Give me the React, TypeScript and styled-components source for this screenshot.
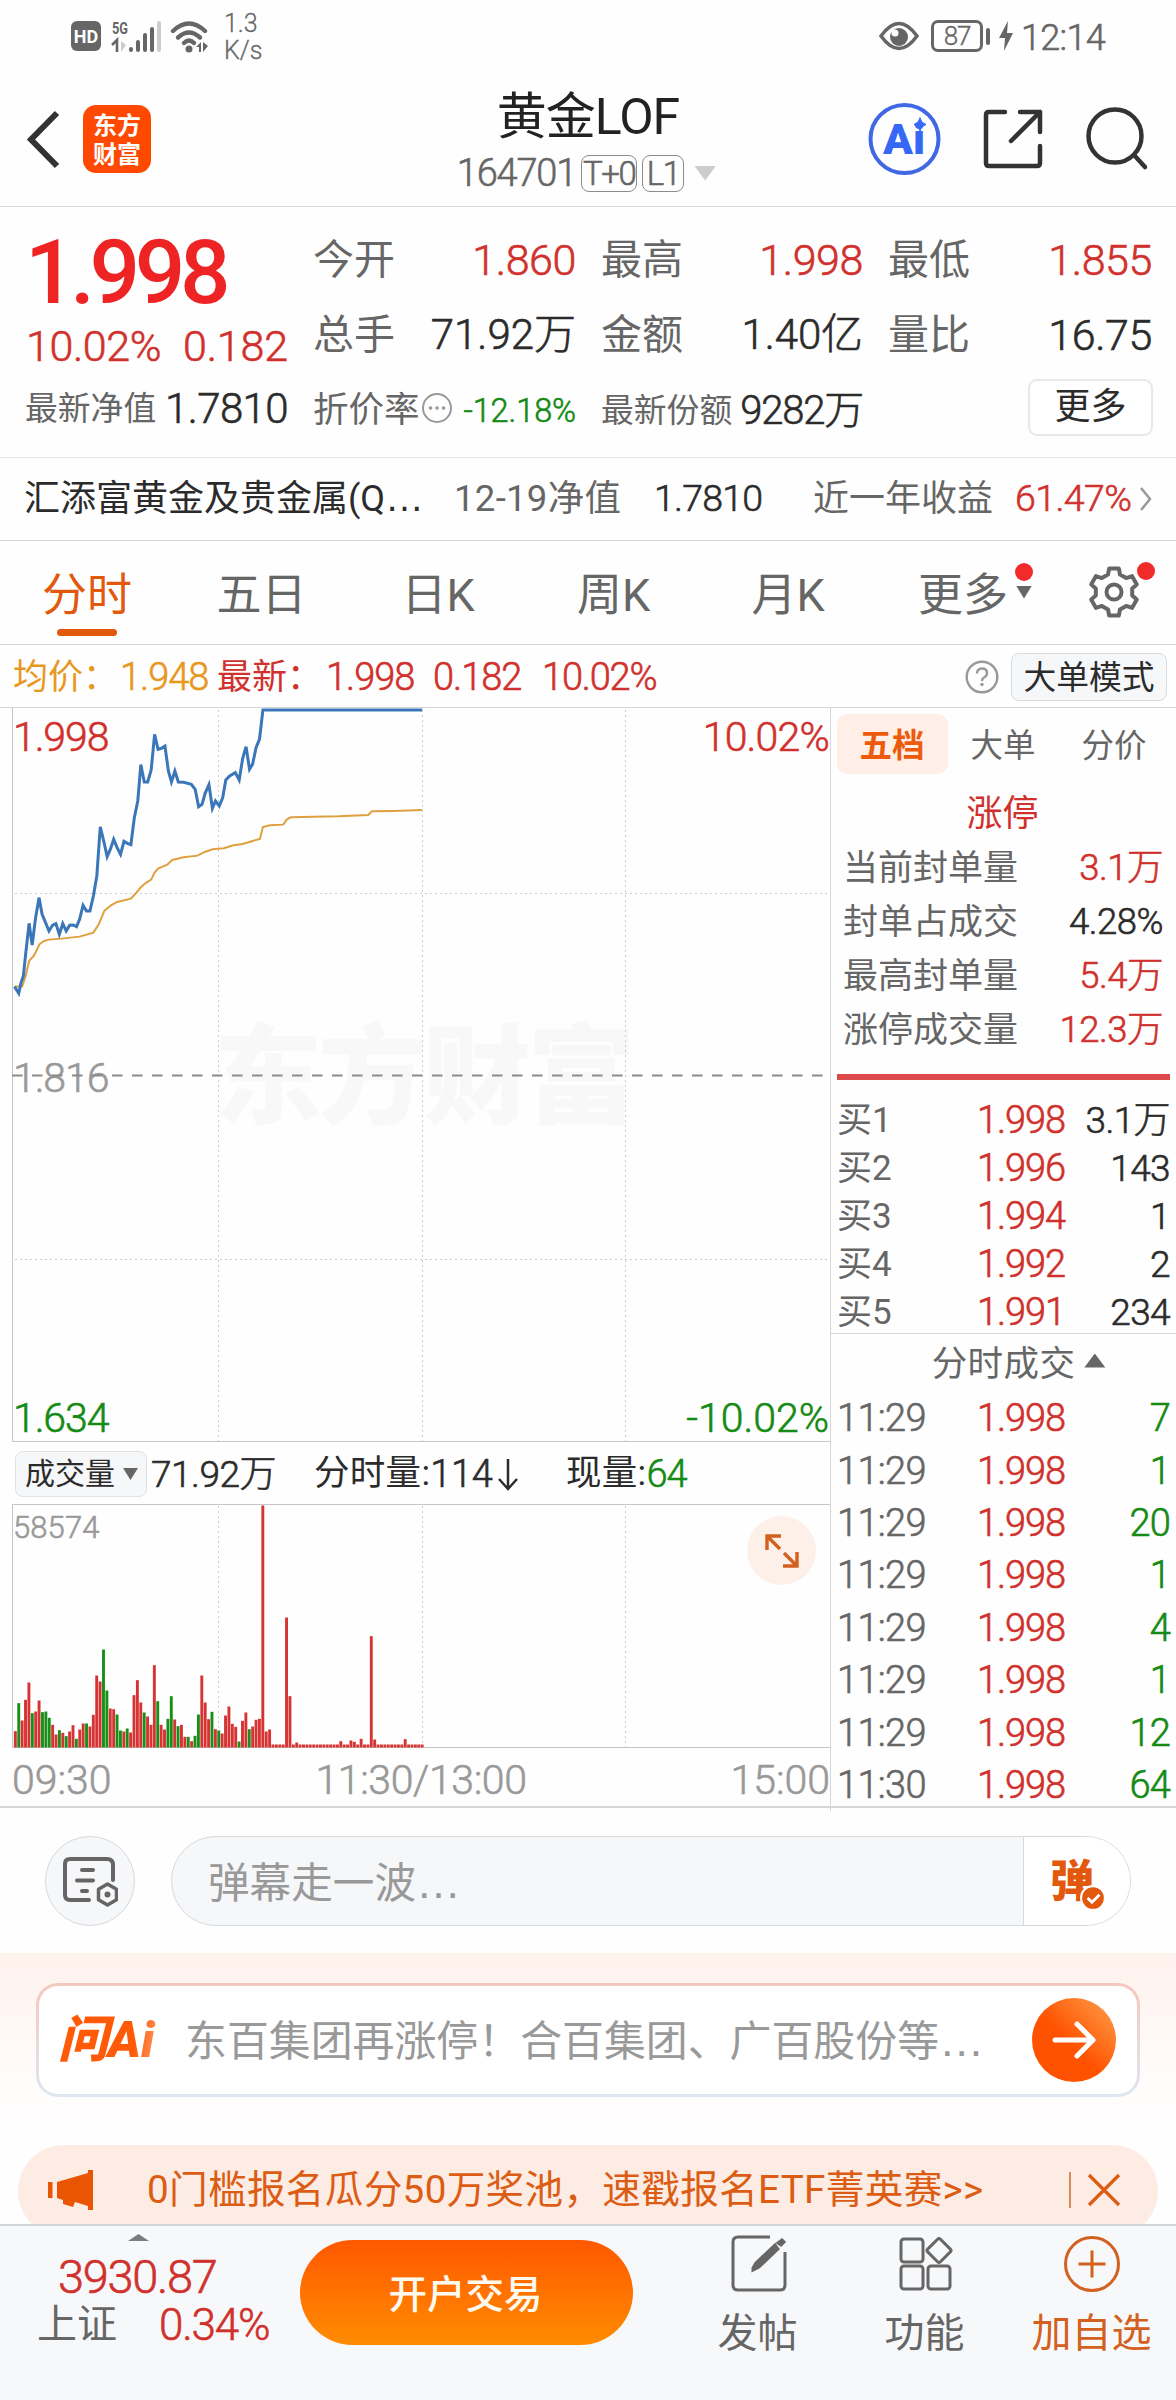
import React from "react";
import styled, { createGlobalStyle, css } from "styled-components";

const RED = "#d0312d";
const GREEN = "#158a15";
const INK = "#2b2b2b";
const GREY = "#666";
const MUTE = "#999";
const ORANGE = "#e2580c";
const LINE = "#d4d6d8";

const Global = createGlobalStyle`
  * { box-sizing: border-box; }
  body { margin: 0; background: #fff; }
`;

const Screen = styled.div`
  width: 1176px;
  height: 2400px;
  overflow: hidden;
  display: flex;
  flex-direction: column;
  background: #fefefe;
  font-family: Roboto, "Noto Sans CJK SC", sans-serif;
  font-weight: 400;
  color: ${INK};
  line-height: 1;
  white-space: nowrap;
`;

type TextProps = { $s?: number; $c?: string; $ls?: number };
const type = css<TextProps>`
  font-size: ${(p) => p.$s ?? 36}px;
  color: ${(p) => p.$c ?? INK};
  letter-spacing: ${(p) => p.$ls ?? 0}px;
`;
/* light figures, thickened slightly so they sit level with the Chinese labels */
const figures = css`
  font-weight: 300;
  -webkit-text-stroke: 0.6px currentColor;
`;
const Label = styled.span<TextProps>`${type}`;
const Num = styled.span<TextProps>`${type} ${figures}`;
const Ellipsis = styled.span`
  font-family: "Liberation Sans", sans-serif;
  font-size: 1.08em;
  line-height: 0;
`;

/* status bar */
const StatusBar = styled.div`
  height: 72px;
  display: flex;
  align-items: center;
  padding: 0 71px 0 71px;
`;
const Hd = styled.div`
  width: 30px;
  height: 30px;
  border-radius: 6px;
  background: #666;
  color: #fff;
  font: 700 18px/31px Roboto, sans-serif;
  text-align: center;
`;
const NetSpeed = styled.div`
  margin: 2px 0 0 15px;
  font-size: 25px;
  font-weight: 300;
  line-height: 27px;
  color: ${GREY};
  -webkit-text-stroke: 0.3px currentColor;
`;
const StatusRight = styled.div`
  margin-left: auto;
  display: flex;
  align-items: center;
`;
const Clock = styled.div`
  ${figures}
  margin: 4px 0 0 8px;
  font-size: 36px;
  letter-spacing: -0.7px;
  color: ${GREY};
`;
const Battery = styled.div`
  width: 52px;
  height: 32px;
  margin-left: 12px;
  border: 3px solid ${GREY};
  border-radius: 7px;
  font-size: 26px;
  font-weight: 300;
  line-height: 27px;
  letter-spacing: -1px;
  text-align: center;
  color: ${GREY};
  -webkit-text-stroke: 0.4px currentColor;
`;
const BatteryNub = styled.div`
  width: 4px;
  height: 17px;
  margin: 0 9px 0 3px;
  border-radius: 2px;
  background: ${GREY};
`;

/* title bar */
const NavBar = styled.div`
  height: 135px;
  display: grid;
  grid-template-columns: 300px 576px 300px;
  border-bottom: 1px solid ${LINE};
`;
const NavLeft = styled.div`
  display: flex;
  align-items: center;
  padding-left: 26px;
`;
const AppLogo = styled.div`
  width: 68px;
  height: 68px;
  margin-left: 23px;
  border-radius: 13px;
  background: #ff4800;
  color: #fff;
  display: flex;
  flex-direction: column;
  align-items: center;
  justify-content: center;
  font: 700 24px/29px "Noto Sans CJK SC", sans-serif;
  padding-bottom: 2px;
`;
const NavTitle = styled.div`
  display: flex;
  flex-direction: column;
  align-items: center;
  padding: 20px 0 0 0;
`;
const Code = styled.div`
  display: flex;
  align-items: center;
  height: 38px;
  margin: 12px 3px 0 0;
`;
const Badge = styled.span<{ $width: number }>`
  ${figures}
  width: ${(p) => p.$width}px;
  height: 37px;
  margin-left: 5px;
  border: 1.5px solid #8c8c8c;
  border-radius: 8px;
  font-size: 33px;
  line-height: 36px;
  letter-spacing: -1.5px;
  text-align: center;
  color: ${GREY};
`;
const Triangle = styled.i<{ $w: number; $h: number; $c: string; $up?: boolean; $m?: string }>`
  display: inline-block;
  flex: none;
  width: ${(p) => p.$w}px;
  height: ${(p) => p.$h}px;
  margin: ${(p) => p.$m ?? "0"};
  background: ${(p) => p.$c};
  clip-path: ${(p) => (p.$up ? "polygon(50% 0, 100% 100%, 0 100%)" : "polygon(0 0, 100% 0, 50% 100%)")};
`;
const NavRight = styled.div`
  display: flex;
  align-items: center;
  padding: 0 24px 0 0;
  justify-content: flex-end;
  svg { flex: none; }
`;

/* quote */
const Quote = styled.div`
  height: 251px;
  padding: 28px 0 0 25px;
  display: flex;
  border-bottom: 1px solid #e9e9e9;
`;
const PriceBlock = styled.div`
  width: 288px;
`;
const BigPrice = styled.div`
  height: 76px;
  padding: 2px 0 0 0;
  font-size: 89px;
  line-height: 72px;
  font-weight: 500;
  letter-spacing: -5.4px;
  color: #ee2424;
`;
const ChangeLine = styled.div`
  display: flex;
  height: 70px;
  align-items: center;
  gap: 22px;
  padding: 1px 0 0 1px;
`;
const QuoteGrid = styled.div`
  display: grid;
  grid-template-columns: 263px 262px 264px;
  grid-template-rows: 50px 100px 52px;
  column-gap: 25px;
  align-items: center;
`;
const Cell = styled.div`
  display: flex;
  align-items: center;
  justify-content: space-between;
`;
const NavCell = styled(Cell)`
  width: 263px;
  height: 56px;
`;
const MoreButton = styled.button`
  justify-self: end;
  width: 125px;
  height: 57px;
  margin: -8px -1px 0 0;
  padding: 0;
  border: 2px solid #e6e8ea;
  border-radius: 9px;
  background: #fff;
  font: 400 36px/1 Roboto, "Noto Sans CJK SC", sans-serif;
  color: ${INK};
`;
const FundRow = styled.div`
  height: 83px;
  display: grid;
  grid-template-columns: 430px 200px 159px 202px 124px 1fr;
  align-items: center;
  padding: 0 22px 0 24px;
  border-bottom: 1px solid ${LINE};
`;

/* period tabs */
const Tabs = styled.div`
  height: 104px;
  display: grid;
  grid-template-columns: 174px 175px 178px 173px 176px 196px 1fr;
  border-bottom: 1px solid ${LINE};
`;
const Tab = styled.div<{ $on?: boolean }>`
  display: flex;
  justify-content: center;
  align-items: center;
  padding-top: 6px;
  font-size: 45px;
  color: ${(p) => (p.$on ? ORANGE : GREY)};
  position: relative;
  &::after {
    content: "";
    display: ${(p) => (p.$on ? "block" : "none")};
    position: absolute;
    left: 57px;
    bottom: 8px;
    width: 60px;
    height: 7px;
    border-radius: 4px;
    background: ${ORANGE};
  }
`;
const Dot = styled.i`
  width: 18px;
  height: 18px;
  border-radius: 50%;
  background: #f12a2a;
`;
const MoreMark = styled.div`
  display: flex;
  flex-direction: column;
  align-items: center;
  gap: 5px;
  margin: -30px -3px 0 7px;
`;
const GearBox = styled.div`
  position: relative;
  padding: 24px 0 0 15px;
  & > i { position: absolute; left: 65px; top: 21px; }
`;
const InfoRow = styled.div`
  height: 63px;
  display: flex;
  align-items: center;
  padding: 2px 9px 0 13px;
  border-bottom: 1px solid ${LINE};
`;
const InfoGroup = styled.div<{ $width: number }>`
  display: flex;
  align-items: center;
  width: ${(p) => p.$width}px;
`;
const ModeButton = styled.button`
  width: 156px;
  height: 48px;
  margin-left: 12px;
  padding: 2px 0 0;
  border: 1.5px solid #d9dcdf;
  border-radius: 8px;
  background: #f6f7f9;
  font: 400 32.8px/1 Roboto, "Noto Sans CJK SC", sans-serif;
  color: ${INK};
`;
const Spacer = styled.div`flex: 1;`;

/* chart and order book */
const Market = styled.div`
  height: 1100px;
  display: grid;
  grid-template-columns: 831px 345px;
  border-bottom: 2px solid ${LINE};
`;
const Charts = styled.div`
  padding-left: 12px;
  border-right: 1px solid ${LINE};
`;
const Plot = styled.div<{ $h: number }>`
  position: relative;
  height: ${(p) => p.$h}px;
  svg { display: block; }
`;
const PlotTag = styled.span<TextProps & { $top: number; $right?: boolean }>`
  ${type}
  ${figures}
  position: absolute;
  top: ${(p) => p.$top}px;
  ${(p) => (p.$right ? "right: 1px;" : "left: 1px;")}
`;
const Watermark = styled.div`
  position: absolute;
  top: 302px;
  left: 202px;
  font: 900 108px/116px "Noto Sans CJK SC", sans-serif;
  letter-spacing: -3.5px;
  color: #f8f8f8;
`;
const PlotArt = styled.svg`
  position: relative;
`;
const ExpandButton = styled.div`
  position: absolute;
  left: 735px;
  top: 12px;
  width: 69px;
  height: 69px;
  border-radius: 50%;
  background: #fdf0e8;
  display: flex;
  align-items: center;
  justify-content: center;
`;
const VolumeBar = styled.div`
  height: 62px;
  display: flex;
  align-items: center;
  padding: 2px 0 0 3px;
`;
const Indicator = styled.div`
  width: 132px;
  height: 46px;
  margin-right: 4px;
  display: flex;
  align-items: center;
  padding-left: 9px;
  border: 1.5px solid #dfe2e5;
  border-radius: 8px;
  background: #f6f7f9;
`;
const Axis = styled.div`
  height: 59px;
  display: grid;
  grid-template-columns: 1fr auto 1fr;
  align-items: center;
  padding-top: 5px;
  & > :last-child { text-align: right; }
`;

const Book = styled.div`
  display: flex;
  flex-direction: column;
`;
const BookTabs = styled.div`
  display: grid;
  grid-template-columns: 111px 111px 111px;
  height: 67px;
  padding: 6px 0 0 6px;
`;
const BookTab = styled.div<{ $on?: boolean }>`
  display: flex;
  align-items: center;
  justify-content: center;
  height: 60px;
  border-radius: 10px;
  font-size: 32.5px;
  padding: 5px 1px 0 0;
  font-weight: ${(p) => (p.$on ? 700 : 400)};
  color: ${(p) => (p.$on ? "#ee5a0c" : GREY)};
  background: ${(p) => (p.$on ? "#ffefe6" : "transparent")};
`;
const LimitTitle = styled.div`
  height: 66px;
  padding-top: 21px;
  margin-right: 2px;
  text-align: center;
  font-size: 36px;
  color: ${RED};
`;
const LimitRow = styled.div`
  height: 54px;
  display: flex;
  justify-content: space-between;
  align-items: center;
  padding: 0 13px 0 12px;
`;
const RatioBar = styled.div`
  height: 6px;
  margin: 17px 6px 16px;
  background: #dd4a4b;
`;
const QuoteRow = styled.div<{ $h: number }>`
  height: ${(p) => p.$h}px;
  display: grid;
  grid-template-columns: 140px 1fr auto;
  align-items: center;
  padding: 0 6px;
`;
const BuyList = styled.div`
  height: 238px;
  border-bottom: 1px solid ${LINE};
`;
const TradeHead = styled.div`
  height: 58px;
  display: flex;
  align-items: center;
  justify-content: center;
  padding: 3px 0 0 36px;
  margin-right: 6px;
`;

/* comment entry */
const CommentBar = styled.div`
  height: 145px;
  display: flex;
  align-items: center;
  padding: 0 45px;
  gap: 36px;
`;
const RoundButton = styled.div`
  width: 90px;
  height: 90px;
  border: 1.5px solid #d6d9dd;
  border-radius: 50%;
  background: #f6f7f9;
  display: flex;
  align-items: center;
  justify-content: center;
`;
const CommentBox = styled.div`
  flex: 1;
  height: 90px;
  display: flex;
  border: 1.5px solid #d6d9dd;
  border-radius: 45px;
  overflow: hidden;
  background: #f6f7f9;
`;
const CommentField = styled.div`
  flex: 1;
  padding: 7px 0 0 36px;
  display: flex;
  align-items: center;
`;
const DanmuToggle = styled.div`
  width: 107px;
  padding: 0 0 5px 26px;
  border-left: 1.5px solid #d6d9dd;
  background: #fff;
  display: flex;
  align-items: center;
  font: 900 44px/1 "Noto Sans CJK SC", sans-serif;
  color: ${ORANGE};
  svg { flex: none; margin: 39px 0 0 -14px; }
`;

/* ask banner */
const AskBand = styled.div`
  height: 192px;
  padding: 30px 36px 0;
  background: linear-gradient(#fef2ed, #fffcfb 70%, #fff);
`;
const AskCard = styled.div`
  height: 114px;
  display: flex;
  align-items: center;
  padding: 0 21px 0 19px;
  border: 3px solid transparent;
  border-radius: 22px;
  background: linear-gradient(#fff, #fff) padding-box, linear-gradient(#f4c8bc, #dfe7f4) border-box;
`;
const AskLogo = styled.span`
  width: 127px;
  font: italic 900 50px/1.2 Roboto, "Noto Sans CJK SC", sans-serif;
  letter-spacing: 0;
  background: linear-gradient(100deg, #ff5a08 60%, #ff9a66 78%);
  -webkit-background-clip: text;
  background-clip: text;
  color: transparent;
`;
const AskText = styled.span`
  padding-top: 4px;
  font-size: 41.9px;
  color: ${MUTE};
`;
const Go = styled.div`
  width: 84px;
  height: 84px;
  margin-left: auto;
  border-radius: 50%;
  background: linear-gradient(45deg, #ff5200 45%, #ff9440 90%);
  display: flex;
  align-items: center;
  justify-content: center;
`;

/* promo strip */
const PromoClip = styled.div`
  height: 79px;
  overflow: hidden;
  padding: 0 18px;
`;
const Promo = styled.div`
  height: 92px;
  display: flex;
  align-items: center;
  padding: 0 37px 2px 30px;
  border-radius: 46px;
  background: #fcece3;
`;
const PromoText = styled.span`
  margin-left: 53px;
  font-size: 38.6px;
  letter-spacing: 0.35px;
  color: #dc5c14;
`;
const PromoRule = styled.i`
  width: 2px;
  height: 36px;
  margin: 0 16px 0 auto;
  background: #d98a5c;
`;

/* bottom bar */
const Dock = styled.div`
  flex: 1;
  display: flex;
  border-top: 2px solid ${LINE};
  background: #f7f8fa;
`;
const Index = styled.div`
  width: 300px;
  padding-top: 8px;
  display: flex;
  flex-direction: column;
`;
const IndexValue = styled.div`
  height: 50px;
  padding: 12px 0 0 58px;
`;
const IndexLine = styled.div`
  display: flex;
  align-items: center;
  height: 48px;
  margin-top: 10px;
  padding-left: 37px;
  gap: 42px;
`;
const TradeButton = styled.button`
  width: 333px;
  height: 105px;
  margin-top: 14px;
  padding: 0 2px 2px 0;
  border: 0;
  border-radius: 53px;
  background: linear-gradient(#ff5800, #ff8c00);
  color: #fffaf0;
  font: 500 38.5px/1 "Noto Sans CJK SC", sans-serif;
`;
const Actions = styled.div`
  flex: 1;
  display: grid;
  grid-template-columns: 167px 167px 167px;
  margin-left: 41px;
`;
const Action = styled.div<{ $hot?: boolean }>`
  display: flex;
  flex-direction: column;
  align-items: center;
  padding-top: 7px;
  gap: 21px;
  font-size: 40px;
  color: ${(p) => (p.$hot ? "#d3601f" : GREY)};
`;

const pricePoints =
  "38,1322 49,1342 55,1310 61,1290 67,1225 76,1132 84,1197 93,1115 102,1055 110,1105 119,1130 128,1155 137,1138 146,1133 155,1165 164,1133 173,1155 182,1138 191,1137 200,1142 208,1120 217,1078 226,1095 235,1095 244,1050 253,990 262,843 271,885 280,932 289,908 297,880 306,905 315,925 324,886 333,892 342,896 351,815 360,765 368,656 377,708 386,708 395,672 404,565 413,610 422,607 431,600 440,675 448,708 457,675 466,708 480,709 500,715 510,730 519,782 528,775 536,742 546,716 555,787 563,765 573,780 582,755 590,702 600,690 615,680 625,702 634,638 643,602 652,670 660,655 669,605 678,580 687,492 1103,492";
const averagePoints =
  "38,1322 58,1322 67,1290 76,1245 88,1230 95,1215 103,1195 115,1185 128,1181 160,1178 208,1172 244,1160 258,1135 273,1094 290,1078 306,1068 342,1058 355,1042 368,1024 380,1012 395,1001 404,980 413,968 437,956 450,942 480,934 516,929 535,918 555,910 585,907 610,898 634,894 660,885 679,879 687,843 705,838 740,836 750,820 760,814 885,811 962,807 972,796 1030,795 1103,792";

/* one entry per minute: bar height in thirds of a pixel, negative for a falling minute */
const volumes = [
  49, -133, 81, 143, 195, -103, 108, 141, -106, -108, -89, 68, 39, -52, 44, -34, 48, 67, -26, 54, 72, -72, 63, 98,
  216, 198, -294, -171, 117, 115, -99, -51, 48, -57, 45, 157, 202, 135, -105, 93, 68, 247, -139, 68, 54, -86, -154,
  84, -64, 68, 32, -32, 19, -35, -99, 216, 135, 85, -107, 55, -51, 42, 96, 123, 71, 62, -18, 80, 105, -55, 63, 83,
  86, 726, 48, 54, 9, 9, 9, 9, 390, 154, 9, 15, 9, 9, 9, 9, 9, 9, 9, 9, 9, 9, 9, 9, 19, 9, 9, 21, 17, 9, 26, 9, 9,
  334, 24, 9, 9, 9, 9, 9, 9, 9, 9, 25, 9, 9, 9, 9, 9,
];

const limits: [string, string, string][] = [
  ["当前封单量", "3.1万", RED],
  ["封单占成交", "4.28%", INK],
  ["最高封单量", "5.4万", RED],
  ["涨停成交量", "12.3万", RED],
];
const bids: [string, string, string][] = [
  ["买1", "1.998", "3.1万"],
  ["买2", "1.996", "143"],
  ["买3", "1.994", "1"],
  ["买4", "1.992", "2"],
  ["买5", "1.991", "234"],
];
const trades: [string, string][] = [
  ["11:29", "7"],
  ["11:29", "1"],
  ["11:29", "20"],
  ["11:29", "1"],
  ["11:29", "4"],
  ["11:29", "1"],
  ["11:29", "12"],
  ["11:30", "64"],
];

const SignalArt = styled.svg`
  margin-left: 10px;
`;
const SignalIcons = () => (
  <SignalArt width="98" height="36" viewBox="0 -1 98 36">
    <text x="1" y="14.500" fontFamily="Roboto, sans-serif" fontWeight="700" fontSize="16" textLength="16" lengthAdjust="spacingAndGlyphs" fill="#666">5G</text>
    <path d="M1 26l5-5v12" fill="none" stroke="#666" strokeWidth="2.6" />
    <path d="M10 22v11l5-7z" fill="#ccc" />
    <g strokeWidth="4" strokeLinecap="round" stroke="#666">
      <path d="M20 30v1M27 23v8M34 16v15M41 10v21" />
      <path d="M48 4v27" stroke="#ccc" />
    </g>
    <g fill="none" stroke="#666" strokeWidth="4.4" strokeLinecap="round">
      <path d="M62 12q16-15 32 0" />
      <path d="M67 18.500q11-10 22 0" />
      <path d="M73 24q5-5 10 0" />
    </g>
    <circle cx="78" cy="30" r="3.500" fill="#666" />
    <path d="M90 23v10h-2v-5h-3zM92 23v10l5-6z" fill="#666" />
  </SignalArt>
);

const Gear = () => {
  const pts: string[] = [];
  for (let i = 0; i < 6; i++) {
    const a = (i * Math.PI) / 3 - Math.PI / 2;
    [[-0.33, 18.5], [-0.2, 24], [0.2, 24], [0.33, 18.5]].forEach(([d, r]) =>
      pts.push(`${(27 + r * Math.cos(a + d)).toFixed(1)},${(27 + r * Math.sin(a + d)).toFixed(1)}`),
    );
  }
  return (
    <svg width="54" height="54" viewBox="0 0 54 54" fill="none" stroke="#666" strokeWidth="4">
      <polygon points={pts.join(" ")} strokeLinejoin="round" />
      <circle cx="27" cy="27" r="7.500" />
    </svg>
  );
};

const DotsArt = styled.svg`
  margin: -6px 8px 0 0;
`;
const DownArrow = styled.svg`
  margin-left: 5px;
`;

const GridLines = ({ h, rows }: { h: number; rows: number[] }) => (
  <g stroke="#c9cbcd" strokeWidth="1">
    <g strokeDasharray="2 3">
      {[206.5, 410.5, 613.5].map((x) => (
        <path key={x} d={`M${x} 2V${h - 1}`} />
      ))}
      {rows.map((y) => (
        <path key={y} d={`M3 ${y}H818`} />
      ))}
    </g>
    <path d={`M.5 0V${h - 0.5}H818`} fill="none" stroke="#c4c6c8" />
  </g>
);

export default function App() {
  return (
    <Screen>
      <Global />
      <StatusBar>
        <Hd>HD</Hd>
        <SignalIcons />
        <NetSpeed>
          <div>1.3</div>
          <div>K/s</div>
        </NetSpeed>
        <StatusRight>
          <svg width="40" height="30" viewBox="0 0 40 30">
            <path d="M2 15Q20-10 38 15Q20 40 2 15z" fill="none" stroke="#666" strokeWidth="3.500" />
            <circle cx="20" cy="16" r="9" fill="#666" />
            <circle cx="16" cy="12" r="3.500" fill="#fff" />
          </svg>
          <Battery>87</Battery>
          <BatteryNub />
          <svg width="14" height="30" viewBox="0 0 14 30" fill="#666">
            <path d="M9 0L0 17h6L5 30l9-18H8z" />
          </svg>
          <Clock>12:14</Clock>
        </StatusRight>
      </StatusBar>

      <NavBar>
        <NavLeft>
          <svg width="34" height="60" viewBox="0 0 34 60" fill="none" stroke="#333" strokeWidth="6">
            <path d="M31 4L5 30.500 31 57" />
          </svg>
          <AppLogo>
            <div>东方</div>
            <div>财富</div>
          </AppLogo>
        </NavLeft>
        <NavTitle>
          <Label $s={50} $c="#222" $ls={-1}>黄金LOF</Label>
          <Code>
            <Num $s={38} $c={GREY} $ls={-1.2}>164701</Num>
            <Badge $width={56}>T+0</Badge>
            <Badge $width={42}>L1</Badge>
            <Triangle $w={22} $h={15} $c="#ccc" $m="0 0 0 10px" />
          </Code>
        </NavTitle>
        <NavRight>
          <svg width="284" height="76" viewBox="0 0 284 76" fill="none" stroke="#333" strokeWidth="4.500" strokeLinecap="round" strokeLinejoin="round">
            <circle cx="36.500" cy="38" r="34" stroke="#4068e4" strokeWidth="4" />
            <text x="15" y="53" fontFamily="Roboto, sans-serif" fontWeight="900" fontSize="42" fill="#3568f5" stroke="none" textLength="42" lengthAdjust="spacingAndGlyphs">Ai</text>
            <path d="M52 17q1 5 6 6.500-5 1.500-6 6.500-1-5-6-6.500 5-1.500 6-6.500z" fill="#3568f5" stroke="#3568f5" strokeWidth="1" />
            <path d="M137 11h-16q-3 0-3 3v48q0 3 3 3h48q3 0 3-3V45M152 11h20v20M172 11L143 40" />
            <circle cx="247" cy="35" r="26.500" />
            <path d="M266 54l11 12" />
          </svg>
        </NavRight>
      </NavBar>

      <Quote>
        <PriceBlock>
          <BigPrice>1.998</BigPrice>
          <ChangeLine>
            <Num $s={43} $c={RED} $ls={-0.4}>10.02%</Num>
            <Num $s={43} $c={RED} $ls={-0.2}>0.182</Num>
          </ChangeLine>
          <NavCell>
            <Label $s={32.8} $c={GREY}>最新净值</Label>
            <Num $s={42} $ls={-0.6}>1.7810</Num>
          </NavCell>
        </PriceBlock>
        <QuoteGrid>
          <Cell><Label $s={41} $c={GREY}>今开</Label><Num $s={43} $c={RED} $ls={-0.4}>1.860</Num></Cell>
          <Cell><Label $s={41} $c={GREY}>最高</Label><Num $s={43} $c={RED} $ls={-0.4}>1.998</Num></Cell>
          <Cell><Label $s={41} $c={GREY}>最低</Label><Num $s={43} $c={RED} $ls={-0.4}>1.855</Num></Cell>
          <Cell><Label $s={41} $c={GREY}>总手</Label><Num $s={42} $ls={0}>71.92万</Num></Cell>
          <Cell><Label $s={41} $c={GREY}>金额</Label><Num $s={42} $ls={-0.1}>1.40亿</Num></Cell>
          <Cell><Label $s={41} $c={GREY}>量比</Label><Num $s={43} $ls={-0.4}>16.75</Num></Cell>
          <Cell>
            <Label $s={35.5} $c={GREY}>折价率</Label>
            <DotsArt width="32" height="32" viewBox="0 0 32 32" fill="none" stroke="#999" strokeWidth="2">
              <circle cx="16" cy="16" r="14" />
              <path d="M9.500 16h.1M16 16h.1M22.500 16h.1" strokeLinecap="round" strokeWidth="3.600" />
            </DotsArt>
            <Num $s={32.5} $c={GREEN} $ls={-0.1}>-12.18%</Num>
          </Cell>
          <Cell><Label $s={32.8} $c={GREY}>最新份额</Label><Num $s={40} $ls={-1.2}>9282万</Num></Cell>
          <MoreButton>更多</MoreButton>
        </QuoteGrid>
      </Quote>

      <FundRow>
        <Label $s={36}>汇添富黄金及贵金属(Q<Ellipsis>…</Ellipsis></Label>
        <Label $s={36.5} $c={GREY} $ls={0.3}>12-19净值</Label>
        <Num $s={37.5} $ls={-0.8}>1.7810</Num>
        <Label $s={36} $c={GREY}>近一年收益</Label>
        <Num $s={37.5} $c={RED} $ls={-0.6}>61.47%</Num>
        <svg width="14" height="26" viewBox="0 0 14 26" fill="none" stroke="#999" strokeWidth="2.500">
          <path d="M2 2l9 11-9 11" />
        </svg>
      </FundRow>

      <Tabs>
        <Tab $on>分时</Tab>
        <Tab>五日</Tab>
        <Tab>日K</Tab>
        <Tab>周K</Tab>
        <Tab>月K</Tab>
        <Tab>
          更多
          <MoreMark>
            <Dot />
            <Triangle $w={16} $h={13} $c={GREY} />
          </MoreMark>
        </Tab>
        <GearBox>
          <Gear />
          <Dot />
        </GearBox>
      </Tabs>

      <InfoRow>
        <InfoGroup $width={204}>
          <InfoGroup $width={107}><Label $s={35} $c="#e8981e">均价：</Label></InfoGroup>
          <Num $s={38} $c="#e8981e" $ls={-1}>1.948</Num>
        </InfoGroup>
        <InfoGroup $width={109}><Label $s={35} $c={RED}>最新：</Label></InfoGroup>
        <InfoGroup $width={107}><Num $s={38} $c={RED} $ls={-1}>1.998</Num></InfoGroup>
        <InfoGroup $width={109}><Num $s={38} $c={RED} $ls={-1}>0.182</Num></InfoGroup>
        <Num $s={38} $c={RED} $ls={-1.2}>10.02%</Num>
        <Spacer />
        <svg width="34" height="34" viewBox="0 0 34 34" fill="none" stroke="#999" strokeWidth="2.400">
          <circle cx="17" cy="17" r="15.300" />
          <path d="M12 13.500q0-5 5-5t5 4.500q0 3-3 4.500-2 1-2 3.500" />
          <circle cx="17" cy="24.500" r="1.700" fill="#999" stroke="none" />
        </svg>
        <ModeButton>大单模式</ModeButton>
      </InfoRow>

      <Market>
        <Charts>
          <Plot $h={734}>
            <Watermark>东方财富</Watermark>
            <PlotTag $s={41} $c={MUTE} $top={350} $ls={-1.1}>1.816</PlotTag>
            <PlotArt width="818" height="734" viewBox="0 0 818 734">
              <GridLines h={734} rows={[185.5, 551.5]} />
              <path d="M0 367.500H813" stroke="#8a8a8a" strokeWidth="2" strokeDasharray="10.500 9.500" />
              <g transform="translate(-12 -162) scale(0.3827 0.3333)" fill="none">
                <polyline points={averagePoints} stroke="#dfa03f" strokeWidth="2" vectorEffect="non-scaling-stroke" />
                <polyline points={pricePoints} stroke="#3a76b8" strokeWidth="3" vectorEffect="non-scaling-stroke" />
              </g>
            </PlotArt>
            <PlotTag $s={41} $c={RED} $top={9} $ls={-1.1}>1.998</PlotTag>
            <PlotTag $s={41} $c={RED} $top={9} $ls={-0.8} $right>10.02%</PlotTag>
            <PlotTag $s={41} $c={GREEN} $top={690} $ls={-1.1}>1.634</PlotTag>
            <PlotTag $s={41} $c={GREEN} $top={690} $ls={0} $right>-10.02%</PlotTag>
          </Plot>

          <VolumeBar>
            <Indicator>
              <Label $s={30}>成交量</Label>
              <Triangle $w={15} $h={12} $c={GREY} $m="0 0 0 8px" />
            </Indicator>
            <InfoGroup $width={163}><Num $s={37} $ls={-0.5}>71.92万</Num></InfoGroup>
            <InfoGroup $width={252}>
              <Label $s={35.5} $ls={0.3}>分时量:</Label>
              <Num $s={38} $ls={-0.4}>114</Num>
              <DownArrow width="22" height="34" viewBox="0 0 22 34" fill="none" stroke={INK} strokeWidth="2.500">
                <path d="M11 2v29M2 22l9 10 9-10" />
              </DownArrow>
            </InfoGroup>
            <Label $s={35.5} $ls={0.3}>现量:</Label>
            <Num $s={38} $c={GREEN} $ls={-1}>64</Num>
          </VolumeBar>

          <Plot $h={244}>
            <svg width="818" height="244" viewBox="0 0 818 244">
              <GridLines h={244} rows={[]} />
              <path d="M0 .5H818" stroke="#c4c6c8" />
              {volumes.map((v, i) => (
                <rect
                  key={i}
                  x={1.9 + i * 3.39}
                  y={243.500 - Math.abs(v) / 3}
                  width="2.900"
                  height={Math.abs(v) / 3}
                  fill={v < 0 ? "#189018" : "#d63333"}
                />
              ))}
            </svg>
            <PlotTag $s={31} $c={MUTE} $top={8} $ls={0.1}>58574</PlotTag>
            <ExpandButton>
              <svg width="36" height="36" viewBox="0 0 36 36" fill="none" stroke="#d3601f" strokeWidth="3.400">
                <path d="M3 17V3h14M4 4l12 12M33 19v14H19M32 32L20 20" />
              </svg>
            </ExpandButton>
          </Plot>

          <Axis>
            <Num $s={41} $c={MUTE}>09:30</Num>
            <Num $s={41} $c={MUTE} $ls={-0.4}>11:30/13:00</Num>
            <Num $s={41} $c={MUTE}>15:00</Num>
          </Axis>
        </Charts>

        <Book>
          <BookTabs>
            <BookTab $on>五档</BookTab>
            <BookTab>大单</BookTab>
            <BookTab>分价</BookTab>
          </BookTabs>
          <LimitTitle>涨停</LimitTitle>
          {limits.map(([k, v, c]) => (
            <LimitRow key={k}>
              <Label $s={35} $c={GREY}>{k}</Label>
              <Num $s={36.5} $c={c} $ls={-0.5}>{v}</Num>
            </LimitRow>
          ))}
          <RatioBar />
          <BuyList>
            {bids.map(([k, p, q]) => (
              <QuoteRow key={k} $h={48.1}>
                <Label $s={35} $c={GREY}>{k}</Label>
                <Num $s={38} $c={RED} $ls={-1.1}>{p}</Num>
                <Num $s={37} $ls={-0.6}>{q}</Num>
              </QuoteRow>
            ))}
          </BuyList>
          <TradeHead>
            <Label $s={35.5} $c={GREY} $ls={0.4}>分时成交</Label>
            <Triangle $w={21} $h={14} $c={GREY} $up $m="-8px 0 0 9px" />
          </TradeHead>
          {trades.map(([t, q], i) => (
            <QuoteRow key={i} $h={52.4}>
              <Num $s={38} $c={GREY} $ls={-0.7}>{t}</Num>
              <Num $s={38} $c={RED} $ls={-1.1}>1.998</Num>
              <Num $s={38} $c={GREEN} $ls={-0.8}>{q}</Num>
            </QuoteRow>
          ))}
        </Book>
      </Market>

      <CommentBar>
        <RoundButton>
          <svg width="56" height="52" viewBox="0 0 56 52" fill="none" stroke="#666" strokeWidth="4" strokeLinecap="round" strokeLinejoin="round">
            <path d="M27 45H8q-5 0-5-5V9q0-5 5-5h37q6 0 6 6v15M20 15h11M15 25.500h16M20 36h5" />
            <path d="M44.500 30.500l9 5.300v10.400l-9 5.300-9-5.300V35.800z" strokeWidth="3.500" transform="translate(1 -1.500)" />
            <circle cx="45.500" cy="39.500" r="2" fill="#666" strokeWidth="2" />
          </svg>
        </RoundButton>
        <CommentBox>
          <CommentField><Label $s={41.6} $c={MUTE}>弹幕走一波<Ellipsis>…</Ellipsis></Label></CommentField>
          <DanmuToggle>
            弹
            <svg width="26" height="26" viewBox="0 0 24 24">
              <circle cx="12" cy="12" r="11" fill={ORANGE} stroke="#fff" strokeWidth="2" />
              <path d="M7 12l4 4 7-7" fill="none" stroke="#fff" strokeWidth="2.600" />
            </svg>
          </DanmuToggle>
        </CommentBox>
      </CommentBar>

      <AskBand>
        <AskCard>
          <AskLogo>问Ai</AskLogo>
          <AskText>东百集团再涨停！合百集团、广百股份等<Ellipsis>…</Ellipsis></AskText>
          <Go>
            <svg width="44" height="40" viewBox="0 0 44 40" fill="none" stroke="#fff" strokeWidth="5" strokeLinecap="round" strokeLinejoin="round">
              <path d="M3 20h38M25 4l16 16-16 16" />
            </svg>
          </Go>
        </AskCard>
      </AskBand>

      <PromoClip>
        <Promo>
          <svg width="46" height="40" viewBox="0 0 46 40" fill="#ea5504">
            <path d="M0 12h4.500v16H0zM9 12L40 3V0h5v40h-5v-4l-13-4-2 5-10-3v-4l-6-2z" />
          </svg>
          <PromoText>0门槛报名瓜分50万奖池，速戳报名ETF菁英赛&gt;&gt;</PromoText>
          <PromoRule />
          <svg width="34" height="34" viewBox="0 0 34 34" stroke="#dc5c14" strokeWidth="3.200">
            <path d="M2 2l30 30M32 2L2 32" />
          </svg>
        </Promo>
      </PromoClip>

      <Dock>
        <Index>
          <Triangle $w={21} $h={7} $c="#7a7c80" $up $m="0 0 0 128px" />
          <IndexValue>
            <Num $s={47} $c={RED} $ls={-1.3}>3930.87</Num>
          </IndexValue>
          <IndexLine>
            <Label $s={40} $c={GREY}>上证</Label>
            <Num $s={44} $c={RED} $ls={-1.2}>0.34%</Num>
          </IndexLine>
        </Index>
        <TradeButton>开户交易</TradeButton>
        <Actions>
          <Action>
            <svg width="58" height="60" viewBox="0 0 58 60" fill="none" stroke="#666" strokeWidth="3">
              <path d="M41 4H9Q4 4 4 9v43q0 5 5 5h42q5 0 5-5V19" />
              <path d="M49 14L30 32l-6 3 0-2 3-5L46 10z M52 10l3-3-2-2-4 3z" fill="#666" strokeWidth="3" transform="translate(0 2)" />
            </svg>
            发帖
          </Action>
          <Action>
            <svg width="58" height="60" viewBox="0 0 58 60" fill="none" stroke="#666" strokeWidth="3">
              <rect x="5" y="6" width="22" height="23" rx="3" />
              <rect x="5" y="33" width="22" height="23" rx="3" />
              <rect x="32" y="33" width="22" height="23" rx="3" />
              <rect x="34" y="8.500" width="18" height="18" rx="2" transform="rotate(45 43 17.500)" />
            </svg>
            功能
          </Action>
          <Action $hot>
            <svg width="60" height="60" viewBox="0 0 60 60" fill="none" stroke="#d3601f" strokeWidth="3">
              <circle cx="30" cy="31" r="26.500" />
              <path d="M30 17.500v27M16.500 31h27" />
            </svg>
            加自选
          </Action>
        </Actions>
      </Dock>
    </Screen>
  );
}
